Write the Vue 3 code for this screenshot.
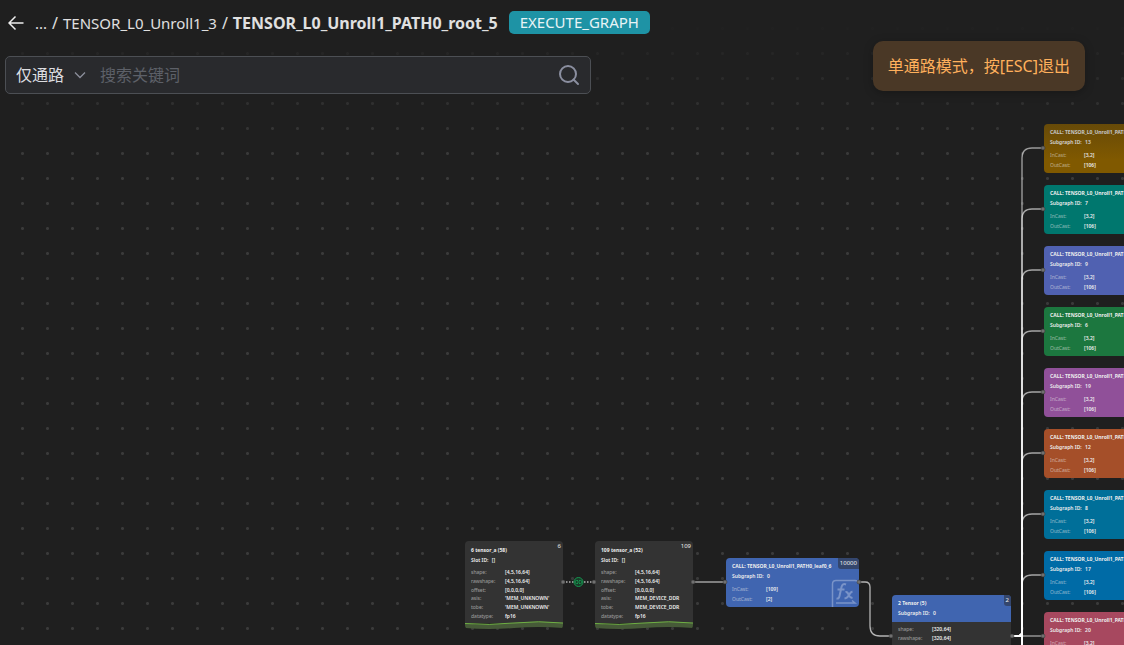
<script setup>
import { ref } from 'vue'

const scope = ref('path')
const keyword = ref('')

const palette = [
  { id: 13, tone: 'amber' },
  { id: 7, tone: 'teal' },
  { id: 9, tone: 'indigo' },
  { id: 6, tone: 'green' },
  { id: 19, tone: 'purple' },
  { id: 12, tone: 'rust' },
  { id: 8, tone: 'cyan' },
  { id: 17, tone: 'azure' },
  { id: 20, tone: 'rose' },
]

const calls = palette.map((item, i) => ({
  ...item,
  x: 1044,
  y: 124 + i * 61,
  title: 'CALL: TENSOR_L0_Unroll1_PATH0_leaf0_' + (i + 7),
  rows: [['InCast:', '[3,2]'], ['OutCast:', '[106]']],
}))

const leaf = {
  id: 0,
  tone: 'blue',
  x: 726,
  y: 558,
  title: 'CALL: TENSOR_L0_Unroll1_PATH0_leaf0_6',
  badge: '10000',
  rows: [['InCast:', '[109]'], ['OutCast:', '[2]']],
}

const callNodes = [leaf, ...calls]

const tensorNodes = [
  {
    x: 465, y: 541, title: '6 tensor_a (58)', badge: '6',
    rows: [['shape:', '[4,5,16,64]'], ['rawshape:', '[4,5,16,64]'], ['offset:', '[0,0,0,0]'], ['asis:', "'MEM_UNKNOWN'"], ['tobe:', "'MEM_UNKNOWN'"], ['datatype:', 'fp16']],
  },
  {
    x: 595, y: 541, title: '109 tensor_a (52)', badge: '109',
    rows: [['shape:', '[4,5,16,64]'], ['rawshape:', '[4,5,16,64]'], ['offset:', '[0,0,0,0]'], ['asis:', 'MEM_DEVICE_DDR'], ['tobe:', 'MEM_DEVICE_DDR'], ['datatype:', 'fp16']],
  },
]

const outRows = [['shape:', '[320,64]'], ['rawshape:', '[320,64]'], ['offset:', '[0,0]'], ['asis:', 'MEM_DEVICE_DDR'], ['tobe:', 'MEM_DEVICE_DDR'], ['datatype:', 'fp16']]

const fanOut = calls.slice(0, 8).map((c) => `M1012 636H1017Q1022 636 1022 631V${c.y + 34}Q1022 ${c.y + 24} 1032 ${c.y + 24}H1043`)
const ports = [
  [563, 582], [594, 582], [693, 582], [725, 582], [859, 582], [891, 636], [1012, 636],
  ...calls.map((c) => [1043, c.y + 24]),
]

const place = (n) => ({ left: n.x + 'px', top: n.y + 'px' })
</script>

<template>
  <main class="viewer">
    <div class="canvas">
      <svg class="edges" aria-hidden="true">
        <path class="edge dotted" d="M563 582H594" />
        <path class="edge" d="M693 582H725" />
        <path class="edge" d="M859 582H865Q870 582 870 587V626Q870 636 880 636H891" />
        <path v-for="d in fanOut" :key="d" class="edge fan" :d="d" />
        <path class="edge fan" d="M1012 636H1043" />
        <path class="trunk" d="M1012 636H1022M1022 575V900" />
      </svg>

      <article v-for="n in callNodes" :key="n.title" class="node call" :class="n.tone" :style="place(n)">
        <h3>{{ n.title }}</h3>
        <p>Subgraph ID: <b>{{ n.id }}</b></p>
        <dl>
          <template v-for="r in n.rows" :key="r[0]"><dt>{{ r[0] }}</dt><dd>{{ r[1] }}</dd></template>
        </dl>
        <span v-if="n.badge" class="badge filled">{{ n.badge }}</span>
        <svg v-if="n.badge" class="fx" viewBox="0 0 28 28" aria-hidden="true">
          <path d="M1.5 28V5Q1.5 1.500 5 1.500H24Q27 1.500 27 4M5 24H24L21 21.500" />
          <path class="thick" d="M15 5.500Q11.500 4 10.500 8L8.500 17Q8 20 5.500 19.500M6.500 10.500H13.500" />
          <path class="thick" d="M14.500 13Q16.500 12.500 17.500 15.500T21.500 19M21.500 12.500Q19.500 13 18 16T13.500 19.500" />
        </svg>
      </article>

      <article v-for="n in tensorNodes" :key="n.title" class="node tensor" :style="place(n)">
        <h3>{{ n.title }}</h3>
        <p>Slot ID: <b>[]</b></p>
        <dl>
          <template v-for="r in n.rows" :key="r[0]"><dt>{{ r[0] }}</dt><dd>{{ r[1] }}</dd></template>
        </dl>
        <span class="badge">{{ n.badge }}</span>
        <svg class="wave" viewBox="0 0 98 8" preserveAspectRatio="none" aria-hidden="true">
          <path class="fill" d="M0 2.500Q24 4.500 49 2T98 2V7Q74 5 49 7T0 7Z" />
          <path class="line" d="M0 2.500Q24 4.500 49 2T98 2" />
        </svg>
      </article>

      <article class="node result" :style="place({ x: 892, y: 595 })">
        <header>
          <h3>2 Tensor (5)</h3>
          <p>Subgraph ID: <b>0</b></p>
          <span class="badge filled">2</span>
        </header>
        <dl>
          <template v-for="r in outRows" :key="r[0]"><dt>{{ r[0] }}</dt><dd>{{ r[1] }}</dd></template>
        </dl>
      </article>

      <svg class="edges" aria-hidden="true">
        <circle v-for="p in ports" :key="p.join()" class="port" :cx="p[0]" :cy="p[1]" r="2" />
        <circle class="link" cx="578.500" cy="582" r="4.500" />
        <path class="link" d="M578 580.500H576.500A1.500 1.500 0 0 0 576.500 583.500H578M579 580.500H580.500A1.500 1.500 0 0 1 580.500 583.500H579M577 582H580" />
      </svg>
    </div>

    <div class="overlay">
      <div class="tools">
        <nav class="crumbs" aria-label="Path">
          <button class="back" type="button" aria-label="Back">
            <svg viewBox="0 0 16 16" aria-hidden="true"><path d="M15.500 8H1M7.500 1.500L1 8L7.500 14.500" /></svg>
          </button>
          <a href="#">...</a><span>/</span><a href="#">TENSOR_L0_Unroll1_3</a><span>/</span><strong>TENSOR_L0_Unroll1_PATH0_root_5</strong>
          <span class="tag">EXECUTE_GRAPH</span>
        </nav>
        <form class="search" @submit.prevent>
          <select v-model="scope" aria-label="范围">
            <option value="path">仅通路</option>
          </select>
          <svg class="chevron" viewBox="0 0 12 12" aria-hidden="true"><path d="M1 3.500L6 8.500L11 3.500" /></svg>
          <input v-model="keyword" type="text" placeholder="搜索关键词" aria-label="搜索关键词" />
          <button type="submit" aria-label="搜索">
            <svg viewBox="0 0 22 22" aria-hidden="true"><circle cx="10" cy="10" r="8" /><path d="M15.500 15.500L20 20" /></svg>
          </button>
        </form>
      </div>
      <div class="notice" role="status">单通路模式，按[ESC]退出</div>
    </div>
  </main>
</template>

<style>
body {
  background: #1f1f1f;
  overflow: hidden;
}
</style>

<style scoped>
.viewer {
  position: relative;
  min-height: 100vh;
  overflow: hidden;
  background: #1f1f1f;
  color: #e0e0e0;
  font-family: "Noto Sans", "Noto Sans CJK SC", sans-serif;
  font-size: 16px;
}
.canvas {
  position: absolute;
  inset: 0;
  overflow: hidden;
  background: radial-gradient(circle at center, #3a3a3a 1px, transparent 2px) 10px 16px / 25px 25px;
}
.edges {
  position: absolute;
  inset: 0;
  width: 100%;
  height: 100%;
}
.edge {
  fill: none;
  stroke: #b4b4b4;
  stroke-width: 1.3;
}
.edge.dotted { stroke-dasharray: 1.5 1.5; }
.edge.fan { stroke: rgba(255, 255, 255, 0.6); }
.trunk {
  fill: none;
  stroke: #fff;
  stroke-width: 2;
}
.port {
  fill: #707070;
  stroke: #333;
  stroke-width: 0.5;
}
.link {
  fill: none;
  stroke: #16954f;
  stroke-width: 1;
}
circle.link { fill: #173d29; }

.node {
  position: absolute;
  box-sizing: border-box;
  overflow: hidden;
  padding: 3px 6px 0;
  border-radius: 4px;
  color: #eee;
  font-size: 5px;
  line-height: 10px;
  white-space: nowrap;
}
.node h3,
.node p,
.node dl,
.node dd {
  margin: 0;
}
.node h3 {
  font-size: 5px;
  font-weight: 700;
}
.node p { font-weight: 600; }
.node b {
  margin-left: 2px;
  font-weight: 600;
}
.node dl {
  display: grid;
  grid-template-columns: 34px 1fr;
  margin-top: 3px;
}
.node dt { opacity: 0.55; }
.node dd { font-weight: 600; }
.call {
  width: 133px;
  height: 49px;
}
.blue { background: #4065b0; }
.amber { background: #805900; }
.teal { background: #00776e; }
.indigo { background: #5061b1; }
.green { background: #1c773f; }
.purple { background: #905099; }
.rust { background: #a54f29; }
.cyan { background: #006f99; }
.azure { background: #006ba6; }
.rose { background: #a7485f; }

.tensor {
  width: 98px;
  height: 88px;
  padding-top: 4px;
  background: linear-gradient(#333 82px, transparent 82px);
}
.tensor dl,
.result dl {
  height: 52px;
  align-content: space-between;
  line-height: 8px;
}
.wave {
  position: absolute;
  left: 0;
  bottom: 0;
  width: 100%;
  height: 8px;
}
.wave .fill { fill: #465a38; }
.wave .line {
  fill: none;
  stroke: #6fb044;
  stroke-width: 1;
}
.result {
  width: 119px;
  padding: 0;
  background: #333;
}
.result header {
  height: 24px;
  padding: 3px 6px 0;
  background: #4065b0;
}
.result dl {
  padding: 0 6px 8px;
}
.badge {
  position: absolute;
  top: 0;
  right: 0;
  padding: 0 2px;
  font-size: 6px;
  line-height: 11px;
}
.badge.filled {
  border-bottom-left-radius: 3px;
  background: #34466d;
}
.fx {
  position: absolute;
  right: 0;
  bottom: 0;
  width: 28px;
  height: 28px;
  fill: none;
  stroke: rgba(255, 255, 255, 0.3);
  stroke-width: 1.5;
}
.fx .thick { stroke-width: 2; }

.overlay {
  position: relative;
  display: flex;
  justify-content: space-between;
  align-items: flex-start;
  height: 160px;
  box-sizing: border-box;
  padding: 8px 39px 0 5px;
  background: linear-gradient(#1f1f1f 20px, rgba(31, 31, 31, 0));
}
.tools {
  flex: 0 1 586px;
  min-width: 0;
}
.crumbs {
  display: flex;
  align-items: center;
  gap: 5px;
  height: 29px;
  white-space: nowrap;
}
.crumbs a {
  color: inherit;
  font-size: 15px;
  text-decoration: none;
}
.crumbs strong { font-weight: 700; }
button {
  display: flex;
  padding: 0;
  border: 0;
  background: none;
  cursor: pointer;
}
.back {
  margin: 0 6px 0 3px;
}
.back svg {
  width: 16px;
  height: 16px;
  fill: none;
  stroke: #eee;
  stroke-width: 1.5;
}
.tag {
  margin-left: 6px;
  padding: 0 11px;
  border-radius: 5px;
  background: #1e93a5;
  color: #e8f4f6;
  font-size: 15px;
  line-height: 23px;
}
.search {
  display: flex;
  align-items: center;
  height: 38px;
  box-sizing: border-box;
  margin-top: 19px;
  padding: 0 10px;
  border: 1px solid #4c4f54;
  border-radius: 5px;
  background: #292a2d;
}
.search select,
.search input {
  padding: 0;
  border: 0;
  outline: 0;
  background: none;
  color: #dcdde0;
  font: inherit;
}
.search select {
  appearance: none;
  width: 58px;
}
.chevron {
  width: 12px;
  height: 12px;
  margin-right: 14px;
  fill: none;
  stroke: #8b8e9b;
  stroke-width: 1.3;
  pointer-events: none;
}
.search input {
  flex: 1;
  min-width: 0;
}
.search input::placeholder { color: #5d6068; }
.search button svg {
  width: 22px;
  height: 22px;
  fill: none;
  stroke: #8b8fa0;
  stroke-width: 2;
  stroke-linecap: round;
}
.notice {
  margin-top: 33px;
  padding: 1px 15px 0;
  border-radius: 10px;
  background: #4a3826;
  box-shadow: 0 2px 10px rgba(0, 0, 0, 0.25);
  color: #ffb05c;
  line-height: 49px;
  white-space: nowrap;
}
</style>
